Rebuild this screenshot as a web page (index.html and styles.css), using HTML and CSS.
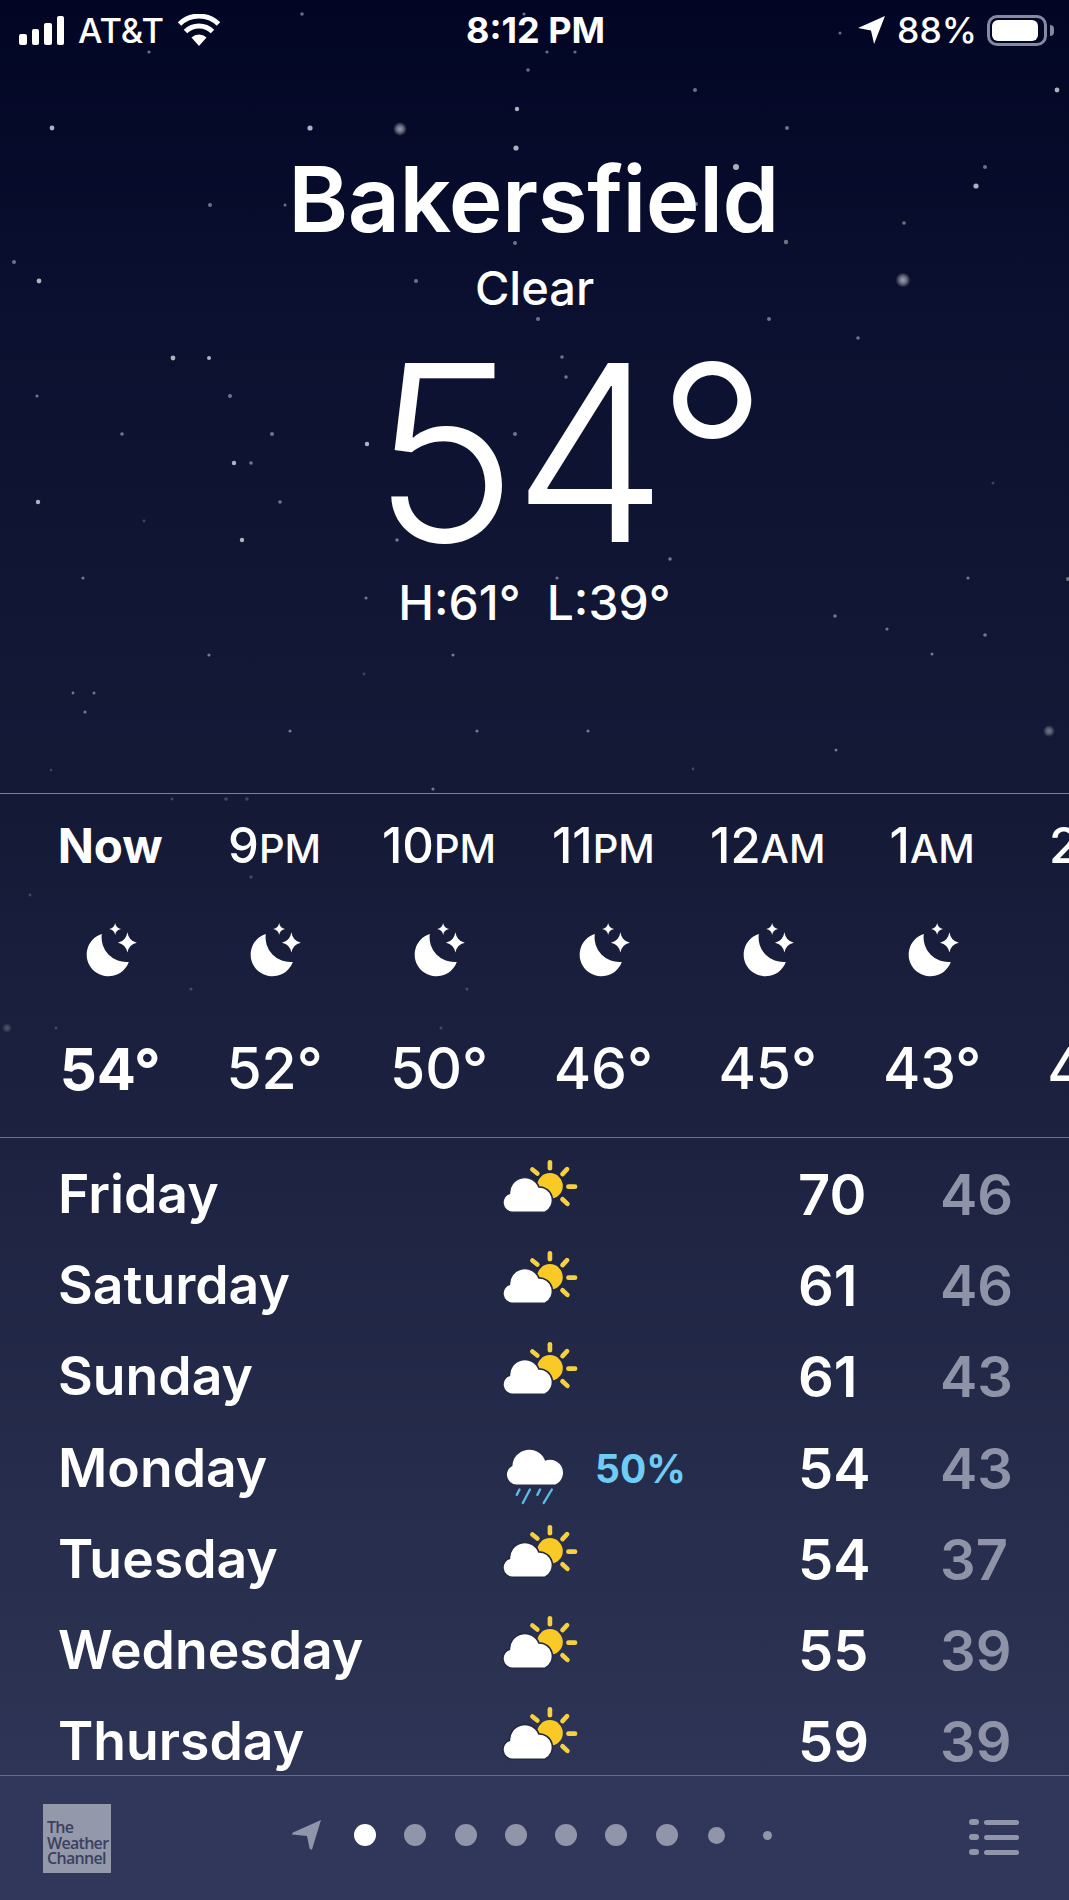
FILE: index.html
```html
<!DOCTYPE html>
<html lang="en">
<head>
  <meta charset="UTF-8">
  <meta name="viewport" content="width=device-width, initial-scale=1.0">
  <title>Weather - Bakersfield</title>
  <link rel="stylesheet" href="styles.css">
</head>
<body>
  <!-- Shared icons -->
  <svg class="defs" aria-hidden="true">
    <defs>
      <radialGradient id="glow">
        <stop offset="0" stop-color="#fff" stop-opacity="0.6"/>
        <stop offset="0.45" stop-color="#fff" stop-opacity="0.42"/>
        <stop offset="1" stop-color="#fff" stop-opacity="0"/>
      </radialGradient>
      <symbol id="moon" viewBox="250 438 148 160">
        <path d="M295 472A62 62 0 1 0 372 552A70 70 0 0 1 295 472Z" fill="#fff"/>
        <path d="M368 467Q372 492 395 497Q372 502 368 525Q364 502 341 497Q364 492 368 467Z" fill="#fff"/>
        <path d="M333 441Q335 455 350 458Q335 461 333 475Q331 461 316 458Q331 455 333 441Z" fill="#fff"/>
      </symbol>
      <symbol id="partly" viewBox="95 58 230 160">
        <circle cx="240" cy="138" r="39" fill="#f9c926"/>
        <g stroke="#f6d043" stroke-width="14" stroke-linecap="round">
          <path d="M240 66V84"/>
          <path d="M292 87L278 102"/>
          <path d="M296 140H316"/>
          <path d="M278 178L293 192"/>
          <path d="M187 88L202 100"/>
        </g>
        <path d="M127 215A27 27 0 0 1 120 162A44 44 0 0 1 205 143A38 38 0 0 1 224 215Z" fill="#fff" stroke="#232946" stroke-width="10" paint-order="stroke"/>
      </symbol>
      <symbol id="rain" viewBox="100 918 190 178">
        <path d="M137 1035A29 29 0 0 1 125 980A50 50 0 0 1 222 965A38 38 0 0 1 252 1035Z" fill="#fff"/>
        <g stroke="#5cb9e9" stroke-width="7" stroke-linecap="round">
          <path d="M138 1066L146 1050"/>
          <path d="M156 1090L177 1050"/>
          <path d="M199 1066L207 1050"/>
          <path d="M218 1090L242 1050"/>
        </g>
      </symbol>
    </defs>
  </svg>

  <div class="phone">
    <!-- Stars on the night sky -->
    <svg class="stars" viewBox="0 0 1069 1900" aria-hidden="true">
      <g class="s2">
        <circle cx="52" cy="128" r="2.4"/><circle cx="310" cy="128" r="2.6"/><circle cx="517" cy="109" r="2.2"/>
        <circle cx="516" cy="148" r="2.6"/><circle cx="39" cy="281" r="2.4"/><circle cx="173" cy="358" r="2.4"/>
        <circle cx="209" cy="358" r="2"/><circle cx="976" cy="186" r="2.6"/><circle cx="1057" cy="90" r="2.4"/>
        <circle cx="367" cy="444" r="2.2"/><circle cx="234" cy="463" r="2.2"/><circle cx="38" cy="502" r="2.2"/>
        <circle cx="242" cy="540" r="2.2"/><circle cx="736" cy="167" r="3"/>
      </g>
      <g class="s1">
        <circle cx="528" cy="70" r="1.8"/><circle cx="210" cy="205" r="2"/><circle cx="285" cy="205" r="1.5"/>
        <circle cx="14" cy="262" r="2"/><circle cx="416" cy="281" r="2"/><circle cx="515" cy="243" r="2"/>
        <circle cx="37" cy="396" r="1.6"/><circle cx="230" cy="396" r="2"/><circle cx="122" cy="434" r="1.8"/>
        <circle cx="272" cy="434" r="2"/><circle cx="515" cy="434" r="2"/><circle cx="695" cy="90" r="2"/>
        <circle cx="787" cy="128" r="2"/><circle cx="985" cy="167" r="2"/><circle cx="696" cy="204" r="2"/>
        <circle cx="904" cy="223" r="1.8"/><circle cx="786" cy="242" r="2.2"/><circle cx="769" cy="319" r="2"/>
        <circle cx="858" cy="338" r="1.8"/><circle cx="538" cy="319" r="2"/><circle cx="562" cy="357" r="1.8"/>
        <circle cx="566" cy="377" r="1.8"/><circle cx="251" cy="463" r="1.8"/><circle cx="280" cy="502" r="1.8"/>
        <circle cx="397" cy="540" r="1.8"/><circle cx="83" cy="578" r="1.6"/><circle cx="366" cy="598" r="1.6"/>
        <circle cx="209" cy="655" r="1.6"/><circle cx="453" cy="655" r="1.6"/><circle cx="73" cy="693" r="1.4"/>
        <circle cx="94" cy="693" r="1.5"/><circle cx="85" cy="712" r="1.6"/><circle cx="290" cy="731" r="1.6"/>
        <circle cx="477" cy="731" r="1.6"/><circle cx="433" cy="789" r="1.6"/><circle cx="670" cy="559" r="1.8"/>
        <circle cx="557" cy="578" r="1.6"/><circle cx="968" cy="578" r="1.6"/><circle cx="1068" cy="579" r="2"/>
        <circle cx="835" cy="616" r="1.8"/><circle cx="887" cy="629" r="1.6"/><circle cx="985" cy="635" r="1.8"/>
        <circle cx="932" cy="654" r="1.5"/><circle cx="588" cy="731" r="1.6"/><circle cx="836" cy="750" r="1.5"/>
        <circle cx="302" cy="14" r="1.8"/><circle cx="524" cy="14" r="1.6"/><circle cx="149" cy="52" r="1.6"/>
        <circle cx="547" cy="52" r="1.6"/><circle cx="575" cy="52" r="1.6"/><circle cx="840" cy="33" r="1.5"/>
      </g>
      <g class="s0">
        <circle cx="144" cy="521" r="1.4"/><circle cx="364" cy="674" r="1.4"/><circle cx="51" cy="770" r="1.3"/>
        <circle cx="993" cy="483" r="1.5"/><circle cx="693" cy="769" r="1.4"/><circle cx="172" cy="799" r="1.4"/>
        <circle cx="226" cy="799" r="1.8"/><circle cx="247" cy="799" r="1.8"/><circle cx="251" cy="877" r="1.7"/>
        <circle cx="30" cy="895" r="1.4"/><circle cx="191" cy="989" r="1.6"/><circle cx="467" cy="989" r="1.6"/>
        <circle cx="56" cy="1028" r="1.4"/><circle cx="441" cy="1028" r="1.5"/>
      </g>
      <circle cx="400" cy="129" r="7" fill="url(#glow)"/>
      <circle cx="903" cy="280" r="7.5" fill="url(#glow)"/>
      <circle cx="1049" cy="731" r="6" fill="url(#glow)" opacity="0.7"/>
      <circle cx="7" cy="1028" r="5" fill="url(#glow)" opacity="0.4"/>
    </svg>

    <!-- Status bar -->
    <div class="status-bar">
      <div class="status-left">
        <div class="signal"><span></span><span></span><span></span><span></span></div>
        <span class="carrier">AT&amp;T</span>
        <svg class="wifi" viewBox="0 0 44 32">
          <path d="M22 32L14.5 23.5A11 11 0 0 1 29.5 23.5Z" fill="#fff"/>
          <path d="M8.5 17.5A19.5 19.5 0 0 1 35.5 17.5" fill="none" stroke="#fff" stroke-width="5"/>
          <path d="M2.5 10A28 28 0 0 1 41.5 10" fill="none" stroke="#fff" stroke-width="5"/>
        </svg>
      </div>
      <div class="clock">8:12 PM</div>
      <div class="status-right">
        <svg class="arrow" viewBox="0 0 26 27"><path d="M26 0L15.5 27L12.5 14L0 11.5Z" fill="#fff"/></svg>
        <span class="percent">88%</span>
        <div class="battery"><div class="battery-fill"></div></div>
        <div class="battery-nub"></div>
      </div>
    </div>

    <!-- Current conditions -->
    <header class="hero">
      <h1 class="city">Bakersfield</h1>
      <div class="condition">Clear</div>
      <div class="temp">54°</div>
      <div class="high-low"><span>H:61°</span><span>L:39°</span></div>
    </header>

    <!-- Hourly forecast -->
    <section class="hourly">
      <div class="hour now">
        <div class="hour-label">Now</div>
        <svg class="moon"><use href="#moon"/></svg>
        <div class="hour-temp">54°</div>
      </div>
      <div class="hour">
        <div class="hour-label">9<small>PM</small></div>
        <svg class="moon"><use href="#moon"/></svg>
        <div class="hour-temp">52°</div>
      </div>
      <div class="hour">
        <div class="hour-label">10<small>PM</small></div>
        <svg class="moon"><use href="#moon"/></svg>
        <div class="hour-temp">50°</div>
      </div>
      <div class="hour">
        <div class="hour-label">11<small>PM</small></div>
        <svg class="moon"><use href="#moon"/></svg>
        <div class="hour-temp">46°</div>
      </div>
      <div class="hour">
        <div class="hour-label">12<small>AM</small></div>
        <svg class="moon"><use href="#moon"/></svg>
        <div class="hour-temp">45°</div>
      </div>
      <div class="hour">
        <div class="hour-label">1<small>AM</small></div>
        <svg class="moon"><use href="#moon"/></svg>
        <div class="hour-temp">43°</div>
      </div>
      <div class="hour">
        <div class="hour-label">2<small>AM</small></div>
        <svg class="moon"><use href="#moon"/></svg>
        <div class="hour-temp">42°</div>
      </div>
    </section>

    <!-- Daily forecast -->
    <section class="daily">
      <div class="day">
        <span class="day-name">Friday</span>
        <svg class="icon-partly"><use href="#partly"/></svg>
        <span class="chance"></span>
        <span class="high">70</span>
        <span class="low">46</span>
      </div>
      <div class="day">
        <span class="day-name">Saturday</span>
        <svg class="icon-partly"><use href="#partly"/></svg>
        <span class="chance"></span>
        <span class="high">61</span>
        <span class="low">46</span>
      </div>
      <div class="day">
        <span class="day-name">Sunday</span>
        <svg class="icon-partly"><use href="#partly"/></svg>
        <span class="chance"></span>
        <span class="high">61</span>
        <span class="low">43</span>
      </div>
      <div class="day">
        <span class="day-name">Monday</span>
        <svg class="icon-rain"><use href="#rain"/></svg>
        <span class="chance">50%</span>
        <span class="high">54</span>
        <span class="low">43</span>
      </div>
      <div class="day">
        <span class="day-name">Tuesday</span>
        <svg class="icon-partly"><use href="#partly"/></svg>
        <span class="chance"></span>
        <span class="high">54</span>
        <span class="low">37</span>
      </div>
      <div class="day">
        <span class="day-name">Wednesday</span>
        <svg class="icon-partly"><use href="#partly"/></svg>
        <span class="chance"></span>
        <span class="high">55</span>
        <span class="low">39</span>
      </div>
      <div class="day">
        <span class="day-name">Thursday</span>
        <svg class="icon-partly"><use href="#partly"/></svg>
        <span class="chance"></span>
        <span class="high">59</span>
        <span class="low">39</span>
      </div>
    </section>

    <!-- Bottom toolbar -->
    <footer class="toolbar">
      <div class="twc-logo">The<br>Weather<br>Channel</div>
      <div class="pager">
        <svg class="pager-arrow" viewBox="0 0 29 30"><path d="M29 0L20 29.5Q18 30 17.5 28L15 16L0 14.5Q0 13 1 12.5Z" fill="#9195a9"/></svg>
        <span class="slot"><i class="dot active"></i></span>
        <span class="slot"><i class="dot"></i></span>
        <span class="slot"><i class="dot"></i></span>
        <span class="slot"><i class="dot"></i></span>
        <span class="slot"><i class="dot"></i></span>
        <span class="slot"><i class="dot"></i></span>
        <span class="slot"><i class="dot"></i></span>
        <span class="slot"><i class="dot dot-small"></i></span>
        <span class="slot"><i class="dot dot-tiny"></i></span>
      </div>
      <div class="list-icon">
        <div class="list-row"><i></i><b></b></div>
        <div class="list-row"><i></i><b></b></div>
        <div class="list-row"><i></i><b></b></div>
      </div>
    </footer>
  </div>
</body>
</html>
```

FILE: styles.css
```css
/* General */
body {
  margin: 0;
  font-family: "Inter", "Liberation Sans", sans-serif;
  color: #fff;
  overflow: hidden;
}

.defs {
  position: absolute;
  width: 0;
  height: 0;
}

.phone {
  position: relative;
  width: 1069px;
  height: 1900px;
  display: flex;
  flex-direction: column;
  overflow: hidden;
  background: linear-gradient(180deg, #020524 0%, #0b1030 16%, #141a36 42%, #1c2240 60%, #272d4c 80%, #31385a 100%);
}

/* Stars */
.stars {
  position: absolute;
  top: 0;
  left: 0;
  width: 1069px;
  height: 1900px;
  pointer-events: none;
  filter: blur(0.5px);
}
.s2 { fill: rgba(255, 255, 255, 0.68); }
.s1 { fill: rgba(255, 255, 255, 0.42); }
.s0 { fill: rgba(255, 255, 255, 0.2); }

/* Status bar */
.status-bar {
  position: relative;
  height: 60px;
  flex: none;
  display: grid;
  grid-template-columns: 1fr auto 1fr;
  align-items: center;
  font-size: 34.5px;
  padding: 0 15px 0 19px;
}

.status-left,
.status-right {
  display: flex;
  align-items: center;
}

.status-right { justify-content: flex-end; }

.signal {
  display: flex;
  align-items: flex-end;
  gap: 5px;
  height: 29px;
}
.signal span {
  width: 7.5px;
  background: #fff;
  border-radius: 2px;
}
.signal span:nth-child(1) { height: 11px; }
.signal span:nth-child(2) { height: 16px; }
.signal span:nth-child(3) { height: 22px; }
.signal span:nth-child(4) { height: 29px; }

.carrier {
  margin-left: 14px;
  font-weight: 500;
}

.wifi {
  width: 44px;
  height: 32px;
  margin-left: 13px;
}

.clock {
  margin-left: -2px;
  font-size: 36px;
  font-weight: 650;
}

.arrow {
  width: 27px;
  height: 28px;
}

.percent {
  margin: 0 10px 0 12px;
  font-size: 35.5px;
  font-weight: 500;
}

.battery {
  width: 60px;
  height: 31px;
  box-sizing: border-box;
  border: 3px solid #858aa1;
  border-radius: 10px;
  padding: 2px;
}
.battery-fill {
  width: 46px;
  height: 100%;
  background: #fff;
  border-radius: 6px;
}
.battery-nub {
  width: 4px;
  height: 11px;
  margin-left: 3px;
  background: #858aa1;
  border-radius: 0 4px 4px 0;
}

/* Current conditions */
.hero {
  position: relative;
  height: 733px;
  flex: none;
  display: flex;
  flex-direction: column;
  align-items: center;
}

.city {
  margin: 83px 0 0;
  padding-right: 2px;
  font-size: 91px;
  font-weight: 570;
  letter-spacing: -0.5px;
  line-height: 112px;
}

.condition {
  margin-top: 5px;
  font-size: 47px;
  font-weight: 500;
  line-height: 56px;
}

.temp {
  margin-top: 15px;
  padding-left: 66px;
  font-size: 246px;
  font-weight: 270;
  letter-spacing: -5px;
  line-height: 244px;
}

.high-low {
  display: flex;
  gap: 26px;
  font-size: 48px;
  font-weight: 500;
  line-height: 56px;
}

/* Hourly forecast */
.hourly {
  position: relative;
  height: 345px;
  flex: none;
  box-sizing: border-box;
  border-top: 1px solid #7b80a0;
  border-bottom: 1px solid #6e7392;
  padding-left: 28px;
  display: flex;
  overflow: hidden;
}

.hour {
  width: 164.4px;
  flex: none;
  display: flex;
  flex-direction: column;
  align-items: center;
}

.hour-label {
  height: 56px;
  margin-top: 24px;
  font-size: 49px;
  font-weight: 500;
  line-height: 56px;
  white-space: nowrap;
}
.hour-label small {
  font-size: 40px;
  line-height: 40px;
}

.moon {
  width: 52px;
  height: 56px;
  margin-top: 48px;
  margin-left: 3px;
}

.hour-temp {
  margin-top: 59px;
  font-size: 57px;
  font-weight: 550;
  line-height: 64px;
  white-space: nowrap;
}

.now .hour-label {
  font-size: 47.5px;
  font-weight: 700;
}
.now .hour-temp {
  font-size: 58px;
  font-weight: 700;
}

/* Daily forecast */
.daily {
  position: relative;
  flex: 1;
  min-height: 0;
  overflow: hidden;
  padding-top: 11px;
}

.day {
  height: 91.3px;
  padding-left: 58px;
  display: grid;
  grid-template-columns: 444px 93px 203px 142px 100px;
  align-items: center;
  font-size: 53.5px;
  font-weight: 570;
  line-height: 64px;
}

.day-name {
  margin-top: -2px;
}

.icon-partly {
  width: 76px;
  height: 54px;
  margin-top: -18px;
}

.icon-rain {
  width: 66px;
  height: 60px;
  margin: 12px 0 0 1px;
}

.chance {
  font-size: 39px;
  font-weight: 700;
  color: #6fcdf5;
}

.high,
.low {
  font-size: 56px;
}

.low {
  color: #8f93a8;
}

/* Bottom toolbar */
.toolbar {
  position: relative;
  height: 125px;
  flex: none;
  box-sizing: border-box;
  border-top: 1px solid #656b8c;
  background: #30375a;
  display: flex;
  padding: 28px 50px 0 43px;
}

.twc-logo {
  width: 68px;
  height: 69px;
  box-sizing: border-box;
  padding: 16px 0 0 4px;
  background: #9498ab;
  color: #3b405e;
  font-family: "Open Sans", sans-serif;
  font-size: 16px;
  font-weight: 600;
  letter-spacing: -0.7px;
  line-height: 15.5px;
}

.pager {
  display: flex;
  align-items: flex-start;
  margin-left: 181px;
  padding-top: 16px;
}

.pager-arrow {
  width: 29px;
  height: 30px;
  margin-right: 19px;
}

.slot {
  width: 50.25px;
  height: 22px;
  margin-top: 4px;
  display: flex;
  align-items: center;
  justify-content: center;
}

.dot {
  width: 22px;
  height: 22px;
  border-radius: 50%;
  background: #9195a9;
}
.dot.active { background: #fff; }
.dot-small { width: 17px; height: 17px; }
.dot-tiny { width: 9px; height: 9px; }

.list-icon {
  margin-left: auto;
  margin-top: 15px;
  display: flex;
  flex-direction: column;
  gap: 9px;
}
.list-row {
  display: flex;
  align-items: center;
  gap: 5px;
}
.list-row i {
  width: 10px;
  height: 6px;
  border-radius: 3px;
  background: #9195a9;
}
.list-row b {
  width: 35px;
  height: 5px;
  border-radius: 3px;
  background: #9195a9;
}
```
